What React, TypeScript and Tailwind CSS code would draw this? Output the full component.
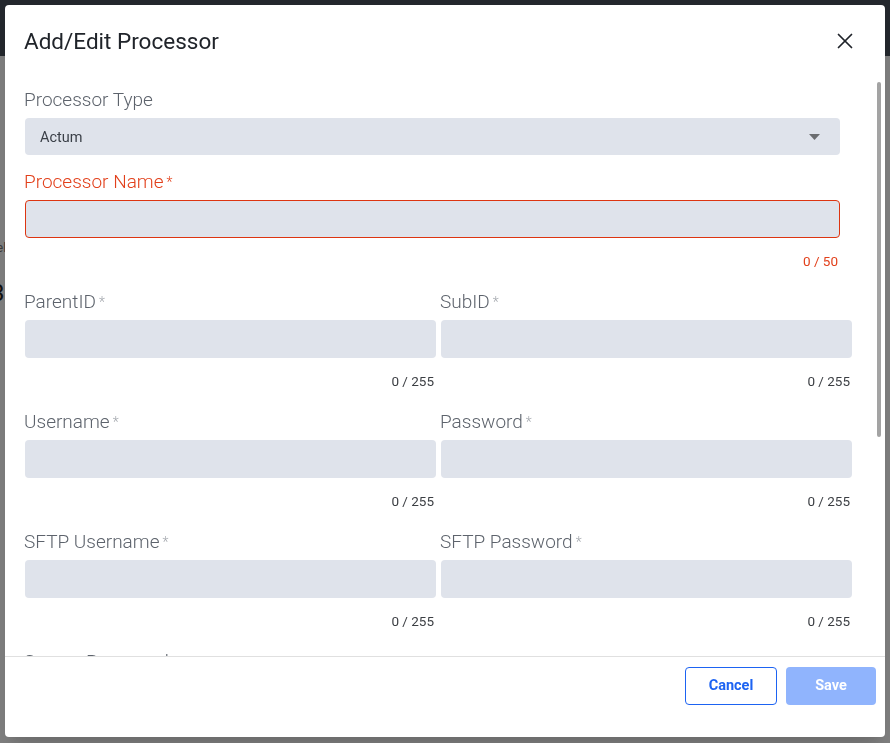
import React from 'react';
import { X } from 'lucide-react';

interface FieldProps {
  label: string;
  max?: number;
  error?: boolean;
}

const Label: React.FC<{ text: string; required?: boolean; error?: boolean }> = ({ text, required, error }) => (
  <label
    className={`-ml-px mb-[5px] block h-[27px] pt-px text-[19px] font-light leading-[26px] ${error ? 'text-[#e2401b]' : 'text-[#5d636c]'}`}
  >
    {text}
    {required && (
      <span className={`ml-[3px] align-top text-[14px] ${error ? 'text-[#e2401b]' : 'text-[#a3a7ad]'}`}>*</span>
    )}
  </label>
);

const TextField: React.FC<FieldProps> = ({ label, max = 255, error }) => (
  <div className="mb-[19px]">
    <Label text={label} required error={error} />
    <input
      type="text"
      className={`block h-[38px] w-full rounded-[4px] bg-[#dfe3eb] px-[15px] text-[14.5px] outline-none ${
        error ? 'border border-[#dd3511]' : ''
      }`}
    />
    <div
      className={`mt-[15px] h-[16px] pr-[2px] text-right text-[13.5px] leading-[16px] ${error ? 'text-[#e2401b]' : 'text-[#3b3e43]'}`}
    >
      0 / {max}
    </div>
  </div>
);

const App: React.FC = () => {
  return (
    <div className="relative h-[743px] w-full overflow-hidden bg-white font-['Roboto',sans-serif]">
      {/* page behind the dialog */}
      <div className="h-14 bg-[#464e5a]" />
      <div className="h-[559px] border-b border-[#cfcfcf]">
        <div className="ml-[-25px] mt-[184px] text-[13px] leading-[16px] text-[#777]">Label</div>
        <div className="ml-[-9px] mt-[22px] text-[24px] leading-[30px] text-[#222]">3</div>
      </div>

      <div className="fixed inset-0 flex items-start justify-center bg-black/50 pt-[5px]">
        <div className="flex h-[732px] w-[880px] flex-col overflow-hidden rounded-[4px] bg-white shadow-xl">
          {/* header */}
          <div className="flex h-[70px] shrink-0 items-start justify-between pl-[19px] pr-[27px] pt-[22px]">
            <h2 className="text-[22.5px] font-normal leading-[28px] text-[#20242a]">Add/Edit Processor</h2>
            <button type="button" className="mt-[1px] text-[#1f232a]">
              <X size={26} strokeWidth={1.6} />
            </button>
          </div>

          {/* body */}
          <div className="relative min-h-0 flex-1">
            <div className="h-full overflow-hidden pl-5 pr-[33px] pt-[11px]">
              <div className="mb-[13px] w-[815px]">
                <Label text="Processor Type" />
                <div className="flex h-[37px] items-center justify-between rounded-[4px] bg-[#dfe3eb] pl-[15px] pr-[20px]">
                  <span className="pt-[2px] text-[14.5px] text-[#3a3f47]">Actum</span>
                  <svg width="11" height="6" viewBox="0 0 11 6" className="mt-[1px]">
                    <path d="M0 0h11L5.5 6z" fill="#6b6d70" />
                  </svg>
                </div>
              </div>

              <div className="w-[815px]">
                <TextField label="Processor Name" max={50} error />
              </div>

              <div className="grid grid-cols-2 gap-x-[5px]">
                <TextField label="ParentID" />
                <TextField label="SubID" />
                <TextField label="Username" />
                <TextField label="Password" />
                <TextField label="SFTP Username" />
                <TextField label="SFTP Password" />
                <TextField label="Secure Password" />
                <div />
                <TextField label="API Key" />
                <TextField label="API Secret" />
                <TextField label="Webhook URL" />
                <TextField label="Callback URL" />
              </div>
            </div>
            {/* scrollbar thumb */}
            <div className="absolute right-[4px] top-[7px] h-[355px] w-[4px] rounded-[2px] bg-[#a3a3a3]" />
          </div>

          {/* footer */}
          <div className="flex h-[81px] shrink-0 items-start justify-end gap-[9px] border-t border-[#e0e0e0] pr-[9px] pt-[10px]">
            <button
              type="button"
              className="h-[38px] w-[92px] rounded-[4px] border border-[#1d63f2] bg-white text-[14.5px] font-bold text-[#1d63f2]"
            >
              Cancel
            </button>
            <button
              type="button"
              disabled
              className="h-[38px] w-[90px] rounded-[4px] bg-[#90b4fd] text-[14.5px] font-bold text-white"
            >
              Save
            </button>
          </div>
        </div>
      </div>
    </div>
  );
};

export default App;
